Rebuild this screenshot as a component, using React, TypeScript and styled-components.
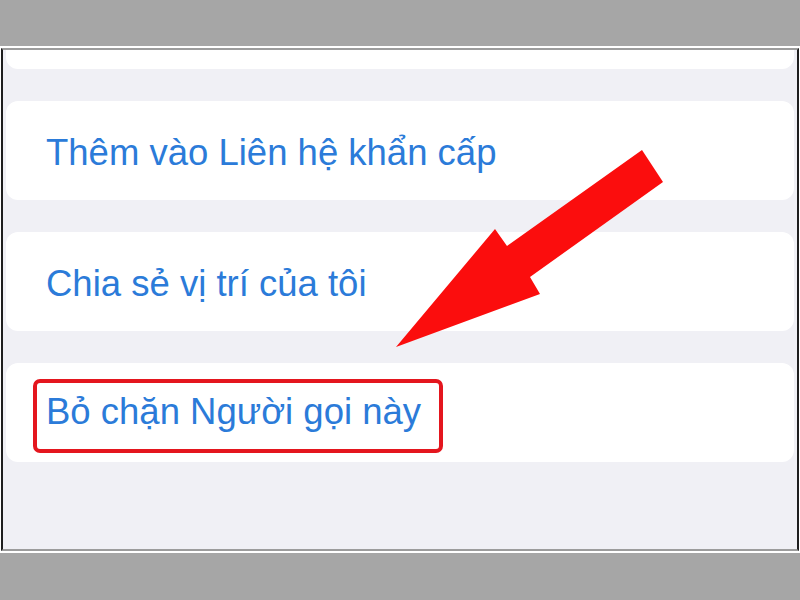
import styled, { createGlobalStyle } from "styled-components";

const GlobalStyle = createGlobalStyle`
  html, body {
    margin: 0;
    padding: 0;
    background: #a6a6a6;
  }
`;

const rows = [
  { label: "Thêm vào Liên hệ khẩn cấp" },
  { label: "Chia sẻ vị trí của tôi" },
  { label: "Bỏ chặn Người gọi này", marked: true },
];

function App() {
  return (
    <>
      <GlobalStyle />
      <Page>
        <Sheet>
          <Frame>
            <List>
              <CardStub />
              {rows.map((row) => (
                <Card key={row.label}>
                  {row.marked ? (
                    <Marked>
                      <Label>{row.label}</Label>
                    </Marked>
                  ) : (
                    <Label>{row.label}</Label>
                  )}
                </Card>
              ))}
            </List>
          </Frame>
        </Sheet>
        <Pointer viewBox="0 0 800 600" aria-hidden="true">
          <polygon
            points="642,150 663,182 530,277 540,294 396,347 495,229 507,246"
            fill="#fb0d0d"
          />
        </Pointer>
      </Page>
    </>
  );
}

const Page = styled.div`
  position: relative;
  width: 800px;
  height: 600px;
  padding-top: 46px;
  box-sizing: border-box;
  background: #a6a6a6;
  overflow: hidden;
`;

const Sheet = styled.div`
  height: 507px;
  padding: 2px 1px;
  box-sizing: border-box;
  background: #ffffff;
`;

const Frame = styled.div`
  height: 100%;
  box-sizing: border-box;
  border-top: 2px solid #9c9c9c;
  border-bottom: 2px solid #9c9c9c;
  border-left: 2px solid #1e1e1e;
  border-right: 2px solid #1e1e1e;
  background: #f0f0f5;
  padding: 0 3px 0 3px;
`;

const List = styled.div`
  display: flex;
  flex-direction: column;
  gap: 32px;
`;

const CardStub = styled.div`
  height: 19px;
  background: #ffffff;
  border-radius: 0 0 12px 12px;
`;

const Card = styled.div`
  height: 99px;
  display: flex;
  align-items: center;
  padding: 6px 0 0 40px;
  box-sizing: border-box;
  background: #ffffff;
  border-radius: 12px;
`;

const Label = styled.span`
  font-family: "Liberation Sans", Arial, sans-serif;
  font-size: 36.5px;
  line-height: 1;
  color: #2b7bd9;
  white-space: nowrap;
`;

const Marked = styled.span`
  display: inline-flex;
  align-items: center;
  margin-left: -13px;
  margin-top: 1px;
  padding: 11px 18px 18px 9px;
  border: 4px solid #e4161e;
  border-radius: 7px;
`;

const Pointer = styled.svg`
  position: absolute;
  inset: 0;
  width: 800px;
  height: 600px;
  pointer-events: none;
`;

export default App;
